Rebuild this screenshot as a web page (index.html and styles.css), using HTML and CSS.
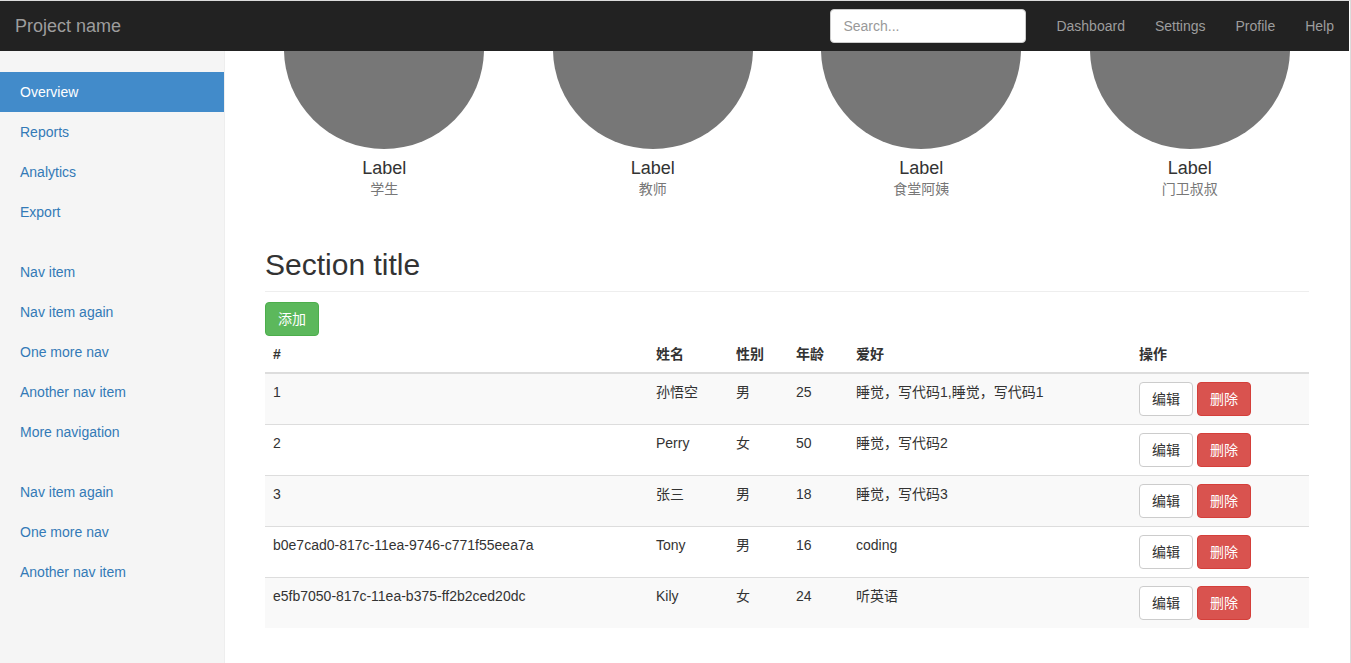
FILE: index.html
```html
<!DOCTYPE html>
<html lang="zh">
<head>
<meta charset="utf-8">
<title>Dashboard</title>
<link rel="stylesheet" href="styles.css">
</head>
<body>
<div class="page">
  <nav class="navbar">
    <a class="brand" href="#">Project name</a>
    <div class="navbar-right">
      <input class="search" type="text" placeholder="Search...">
      <ul class="nav-links">
        <li><a href="#">Dashboard</a></li>
        <li><a href="#">Settings</a></li>
        <li><a href="#">Profile</a></li>
        <li><a href="#">Help</a></li>
      </ul>
    </div>
  </nav>
  <div class="body-row">
    <aside class="sidebar">
      <ul class="nav-sidebar">
        <li class="active"><a href="#">Overview</a></li>
        <li><a href="#">Reports</a></li>
        <li><a href="#">Analytics</a></li>
        <li><a href="#">Export</a></li>
      </ul>
      <ul class="nav-sidebar">
        <li><a href="#">Nav item</a></li>
        <li><a href="#">Nav item again</a></li>
        <li><a href="#">One more nav</a></li>
        <li><a href="#">Another nav item</a></li>
        <li><a href="#">More navigation</a></li>
      </ul>
      <ul class="nav-sidebar">
        <li><a href="#">Nav item again</a></li>
        <li><a href="#">One more nav</a></li>
        <li><a href="#">Another nav item</a></li>
      </ul>
    </aside>
    <main class="main">
      <div class="scroller">
        <div class="placeholders">
          <div class="placeholder">
            <div class="circle"></div>
            <h4>Label</h4>
            <span class="muted">学生</span>
          </div>
          <div class="placeholder">
            <div class="circle"></div>
            <h4>Label</h4>
            <span class="muted">教师</span>
          </div>
          <div class="placeholder">
            <div class="circle"></div>
            <h4>Label</h4>
            <span class="muted">食堂阿姨</span>
          </div>
          <div class="placeholder">
            <div class="circle"></div>
            <h4>Label</h4>
            <span class="muted">门卫叔叔</span>
          </div>
        </div>
        <h2 class="sub-header">Section title</h2>
        <button class="btn btn-success" type="button">添加</button>
        <table class="table">
          <colgroup>
            <col class="c-id"><col class="c-name"><col class="c-sex"><col class="c-age"><col class="c-hobby"><col class="c-op">
          </colgroup>
          <thead>
            <tr><th>#</th><th>姓名</th><th>性别</th><th>年龄</th><th>爱好</th><th>操作</th></tr>
          </thead>
          <tbody>
            <tr class="odd"><td>1</td><td>孙悟空</td><td>男</td><td>25</td><td>睡觉，写代码1,睡觉，写代码1</td><td><button class="btn btn-default">编辑</button> <button class="btn btn-danger">删除</button></td></tr>
            <tr><td>2</td><td>Perry</td><td>女</td><td>50</td><td>睡觉，写代码2</td><td><button class="btn btn-default">编辑</button> <button class="btn btn-danger">删除</button></td></tr>
            <tr class="odd"><td>3</td><td>张三</td><td>男</td><td>18</td><td>睡觉，写代码3</td><td><button class="btn btn-default">编辑</button> <button class="btn btn-danger">删除</button></td></tr>
            <tr><td>b0e7cad0-817c-11ea-9746-c771f55eea7a</td><td>Tony</td><td>男</td><td>16</td><td>coding</td><td><button class="btn btn-default">编辑</button> <button class="btn btn-danger">删除</button></td></tr>
            <tr class="odd"><td>e5fb7050-817c-11ea-b375-ff2b2ced20dc</td><td>Kily</td><td>女</td><td>24</td><td>听英语</td><td><button class="btn btn-default">编辑</button> <button class="btn btn-danger">删除</button></td></tr>
          </tbody>
        </table>
      </div>
    </main>
  </div>
</div>
</body>
</html>
```
FILE: styles.css
```css
* { box-sizing: border-box; }
html, body { margin: 0; padding: 0; height: 100%; }
body {
  font-family: "Liberation Sans", "Noto Sans CJK SC", sans-serif;
  font-size: 14px;
  line-height: 20px;
  color: #333;
  background: #fff;
  overflow: hidden;
}
.page {
  height: 663px;
  border-top: 1px solid #dcdcdc;
  border-right: 1px solid #dcdcdc;
  padding-right: 1px;
  display: flex;
  flex-direction: column;
}
a { text-decoration: none; }
ul { list-style: none; margin: 0; padding: 0; }

.navbar {
  height: 50px;
  flex: 0 0 50px;
  background: #222;
  display: flex;
  align-items: center;
  justify-content: space-between;
}
.brand {
  padding: 0 15px;
  font-size: 18px;
  line-height: 20px;
  color: #9d9d9d;
}
.navbar-right { display: flex; align-items: center; }
.search {
  width: 196px;
  height: 34px;
  margin-right: 15px;
  padding: 6px 12px;
  border: 1px solid #ccc;
  border-radius: 4px;
  background: #fff;
  font-family: "Liberation Sans", sans-serif;
  font-size: 14px;
  color: #555;
  outline: none;
}
.search::placeholder { color: #999; }
.nav-links { display: flex; }
.nav-links a {
  display: block;
  padding: 15px;
  line-height: 20px;
  color: #9d9d9d;
}

.body-row { flex: 1; display: flex; min-height: 0; }
.sidebar {
  width: 225px;
  flex: 0 0 225px;
  background: #f5f5f5;
  border-right: 1px solid #eee;
  padding-top: 21px;
}
.nav-sidebar { margin-bottom: 20px; }
.nav-sidebar a {
  display: block;
  padding: 10px 20px;
  line-height: 20px;
  color: #337ab7;
}
.nav-sidebar .active a { background: #428bca; color: #fff; }

.main {
  flex: 1;
  min-width: 0;
  overflow: hidden;
  padding: 0 40px;
}
.scroller { margin-top: -102px; }

.placeholders {
  display: grid;
  grid-template-columns: repeat(4, 1fr);
  margin: 0 -15px 30px;
  text-align: center;
}
.placeholder { padding: 0 15px; margin-bottom: 20px; }
.circle {
  width: 200px;
  height: 200px;
  margin: 0 auto;
  border-radius: 50%;
  background: #777;
}
.placeholder h4 {
  margin: 10px 0 0;
  font-size: 18px;
  font-weight: 500;
  line-height: 19.8px;
}
.muted { display: block; color: #777; }

.sub-header {
  margin: 0 0 10px;
  padding: 0 0 10px;
  border-bottom: 1px solid #eee;
  font-size: 30px;
  font-weight: 500;
  line-height: 32px;
}

.btn {
  display: inline-block;
  height: 34px;
  padding: 6px 12px;
  font-family: "Liberation Sans", "Noto Sans CJK SC", sans-serif;
  font-size: 14px;
  line-height: 20px;
  border: 1px solid transparent;
  border-radius: 4px;
  vertical-align: top;
  cursor: pointer;
}
.btn-success { background: #5cb85c; border-color: #4cae4c; color: #fff; }
.btn-default { background: #fff; border-color: #ccc; color: #333; }
.btn-danger { background: #d9534f; border-color: #d43f3a; color: #fff; }

.table {
  width: 100%;
  border-collapse: collapse;
  table-layout: fixed;
}
.c-id { width: 383px; }
.c-name { width: 80px; }
.c-sex { width: 60px; }
.c-age { width: 60px; }
.c-hobby { width: 283px; }
.c-op { width: 178px; }
.table th {
  text-align: left;
  font-weight: bold;
  padding: 8px;
  line-height: 20px;
  border-bottom: 2px solid #ddd;
  vertical-align: bottom;
}
.table td {
  padding: 8px;
  line-height: 20px;
  border-top: 1px solid #ddd;
  vertical-align: top;
  white-space: nowrap;
}
.table tbody tr:first-child td { border-top: 0; }
.table tr.odd td { background: #f9f9f9; }
```
